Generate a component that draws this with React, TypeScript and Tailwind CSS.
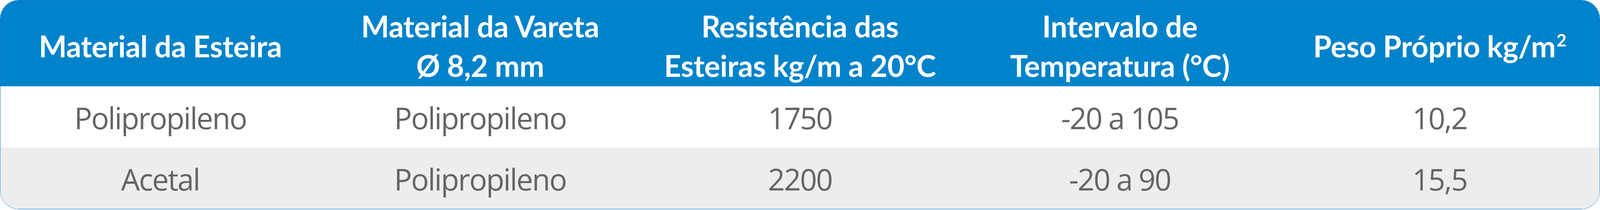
const headers: React.ReactNode[] = [
  "Material da Esteira",
  <>
    Material da Vareta
    <br />Ø 8,2 mm
  </>,
  <>
    Resistência das
    <br />
    Esteiras kg/m a 20°C
  </>,
  <>
    Intervalo de
    <br />
    Temperatura (°C)
  </>,
  <>
    Peso Próprio kg/m<sup className="text-[0.58em] relative -top-[0.62em] ml-[2px]">2</sup>
  </>,
];

const rows = [
  ["Polipropileno", "Polipropileno", "1750", "-20 a 105", "10,2"],
  ["Acetal", "Polipropileno", "2200", "-20 a 90", "15,5"],
];

export default function App() {
  return (
    <div className="w-full h-[538px] bg-white">
      <div className="h-[536px] rounded-[48px] overflow-hidden border-[1.5px] border-[#0f7fc4] flex flex-col">
        <div className="grid grid-cols-5 h-[220px] shrink-0 bg-[#0083ca] text-white font-bold text-[76px] leading-[101px] tracking-[-0.5px] font-['Lato',sans-serif]">
          {headers.map((h, i) => (
            <div key={i} className="flex items-center justify-center text-center pt-[12px]">
              <div>{h}</div>
            </div>
          ))}
        </div>
        {rows.map((r, ri) => (
          <div
            key={ri}
            className={`grid grid-cols-5 flex-1 text-[76px] tracking-[-2.5px] text-[#646464] font-['Open_Sans',sans-serif] ${
              ri === 1 ? "bg-[#ededed]" : "bg-white"
            }`}
          >
            {r.map((c, ci) => (
              <div key={ci} className="flex items-center justify-center pt-[4px]">
                {c}
              </div>
            ))}
          </div>
        ))}
      </div>
    </div>
  );
}
